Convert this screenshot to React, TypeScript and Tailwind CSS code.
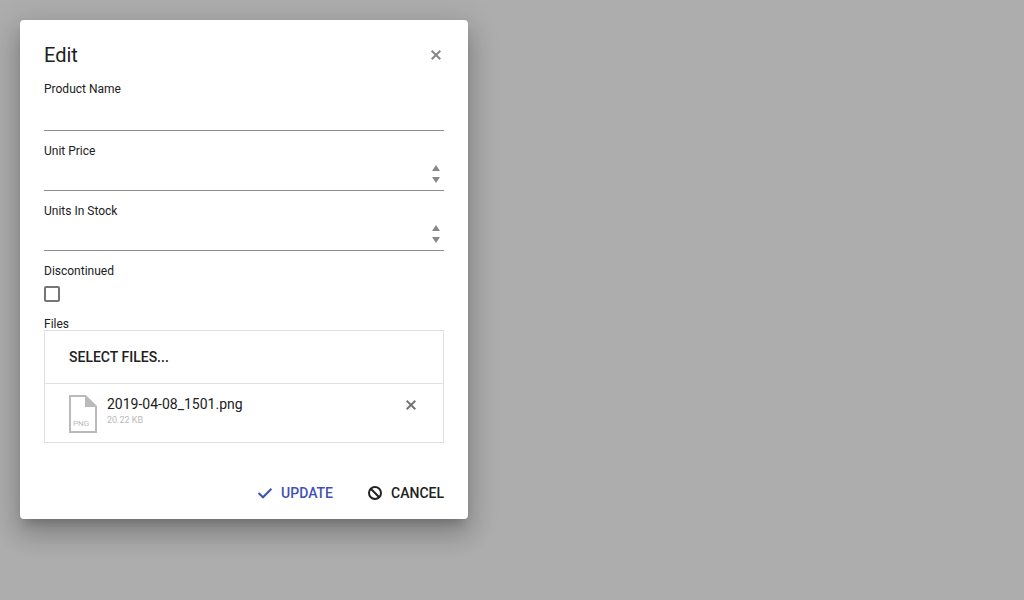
import { useState } from "react";
import type { ReactNode } from "react";

function CloseIcon() {
  return (
    <svg width="16" height="16" viewBox="0 0 16 16" fill="none" stroke="currentColor" strokeWidth="2" aria-hidden="true">
      <path d="M3.7 3.7 12.3 12.3M12.3 3.7 3.7 12.3" />
    </svg>
  );
}

function Field({ id, label, children }: { id: string; label: string; children: ReactNode }) {
  return (
    <div className="flex flex-col">
      <label htmlFor={id} className="text-xs leading-3">
        {label}
      </label>
      {children}
    </div>
  );
}

function NumberInput({ id }: { id: string }) {
  const [value, setValue] = useState("");
  const step = (by: number) => setValue(String((Number(value) || 0) + by));
  return (
    <div className="flex h-[34px] items-center border-b border-[#8c8c8c] pr-1">
      <input
        id={id}
        inputMode="decimal"
        value={value}
        onChange={(e) => setValue(e.target.value)}
        className="min-w-0 flex-1 bg-transparent text-sm outline-none"
      />
      <div className="flex flex-col gap-1.5 text-[#888888]">
        <button type="button" aria-label="Increase value" onClick={() => step(1)}>
          <svg className="block" width="8" height="6" viewBox="0 0 8 6" fill="currentColor">
            <path d="M4 0 8 6H0Z" />
          </svg>
        </button>
        <button type="button" aria-label="Decrease value" onClick={() => step(-1)}>
          <svg className="block" width="8" height="6" viewBox="0 0 8 6" fill="currentColor">
            <path d="M0 0H8L4 6Z" />
          </svg>
        </button>
      </div>
    </div>
  );
}

export default function App() {
  return (
    <div className="min-h-screen bg-[#adadad] p-5 font-['Roboto',sans-serif] text-[#212121]">
      <form
        role="dialog"
        aria-labelledby="title"
        onSubmit={(e) => e.preventDefault()}
        className="w-full max-w-md rounded bg-white px-6 pt-6 pb-2 shadow-[0_8px_10px_-5px_rgba(0,0,0,0.2),0_16px_24px_2px_rgba(0,0,0,0.14),0_6px_30px_5px_rgba(0,0,0,0.12)]"
      >
        <header className="flex items-center justify-between">
          <h1 id="title" className="text-xl leading-[22px]">
            Edit
          </h1>
          <button type="button" aria-label="Close" className="text-[#888888]">
            <CloseIcon />
          </button>
        </header>

        <div className="mt-[17px] flex flex-col gap-3.5">
          <Field id="name" label="Product Name">
            <input id="name" className="h-9 w-full border-b border-[#8c8c8c] bg-transparent text-sm outline-none" />
          </Field>
          <Field id="price" label="Unit Price">
            <NumberInput id="price" />
          </Field>
          <Field id="stock" label="Units In Stock">
            <NumberInput id="stock" />
          </Field>
          <Field id="discontinued" label="Discontinued">
            <input
              id="discontinued"
              type="checkbox"
              className="mt-[9px] size-4 appearance-none rounded-xs border-2 border-[#757575] checked:bg-[#3f51b5]"
            />
          </Field>
        </div>

        <section aria-labelledby="files" className="mt-4">
          <h2 id="files" className="text-xs leading-3">
            Files
          </h2>
          <div className="border border-[#e0e0e0]">
            <div className="flex h-[53px] items-center border-b border-[#e0e0e0] px-6">
              <button type="button" className="text-sm font-medium uppercase">
                Select files...
              </button>
            </div>
            <ul>
              <li className="flex h-[58px] items-start px-6 pt-[11px]">
                <svg width="28" height="38" viewBox="0 0 28 38" role="img" aria-label="PNG file">
                  <path d="M1 1H16.5L27 11.5V37H1Z" fill="none" stroke="#bababa" strokeWidth="2" />
                  <path d="M16 0 28 12H16Z" fill="#bababa" />
                  <text x="4" y="31" fontSize="8" fill="#bababa">
                    PNG
                  </text>
                </svg>
                <div className="ml-2.5 flex-1">
                  <p className="text-sm leading-[18px]">2019-04-08_1501.png</p>
                  <p className="text-[9px] leading-[14px] text-[#bababa]">20.22 KB</p>
                </div>
                <button type="button" aria-label="Remove file" className="mt-0.5 text-[#757575]">
                  <CloseIcon />
                </button>
              </li>
            </ul>
          </div>
        </section>

        <footer className="mt-8 flex h-9 items-center justify-end gap-[34px] text-sm font-medium uppercase">
          <button type="submit" className="flex items-center gap-2 uppercase text-[#3f51b5]">
            <svg width="16" height="16" viewBox="0 0 16 16" fill="none" stroke="currentColor" strokeWidth="2" aria-hidden="true">
              <path d="M1.5 8 6 12.3 14.4 3.7" />
            </svg>
            Update
          </button>
          <button type="button" className="flex items-center gap-2 uppercase">
            <svg width="16" height="16" viewBox="0 0 16 16" fill="none" stroke="currentColor" strokeWidth="2" aria-hidden="true">
              <circle cx="8" cy="8" r="6" />
              <path d="M3.8 3.8 12.2 12.2" />
            </svg>
            Cancel
          </button>
        </footer>
      </form>
    </div>
  );
}
